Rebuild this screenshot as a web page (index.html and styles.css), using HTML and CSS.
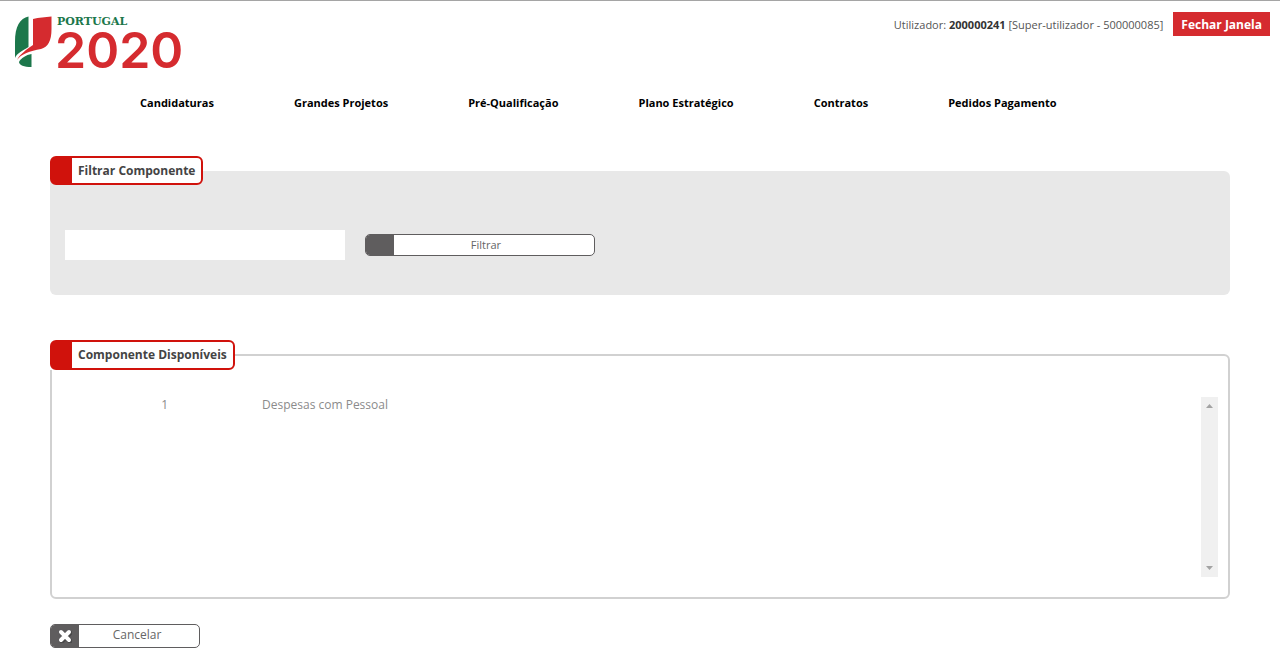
FILE: index.html
```html
<!DOCTYPE html>
<html lang="pt">
<head>
<meta charset="utf-8">
<title>Portugal 2020</title>
<link rel="stylesheet" href="styles.css">
</head>
<body>
<header class="top">
  <svg class="logo" width="190" height="74" viewBox="0 0 190 74" role="img" aria-label="Portugal 2020">
    <path fill="#1c774b" d="M18.500 5.500C10 7.500 5 15 5 31V47C7 42 12 40 18.500 36Z"/>
    <path fill="#d52b2f" d="M23 8C29 6.500 35 6 41.500 5.500V18C41.500 30 38 36 31 38C20 40 11 43 7 49C10 43 16 39 23 34Z"/>
    <path fill="#1c774b" d="M21.500 43V56C14 56 9 54 9 51C11 47 16 44 21.500 43Z"/>
    <text class="logo-name" x="47" y="14">PORTUGAL</text>
    <text class="logo-year" x="45" y="57">2020</text>
  </svg>
  <div class="user">
    <span>Utilizador: <strong>200000241</strong> [Super-utilizador - 500000085]</span>
    <button class="close" type="button">Fechar Janela</button>
  </div>
</header>
<nav class="menu">
  <a href="#">Candidaturas</a>
  <a href="#">Grandes Projetos</a>
  <a href="#">Pré-Qualificação</a>
  <a href="#">Plano Estratégico</a>
  <a href="#">Contratos</a>
  <a href="#">Pedidos Pagamento</a>
</nav>
<main class="content">
  <fieldset class="panel filter">
    <legend class="title">Filtrar Componente</legend>
    <div class="filter-row">
      <input class="field" type="text" aria-label="Componente">
      <button class="btn btn-wide" type="button"><span class="btn-icon"></span><span class="btn-label">Filtrar</span></button>
    </div>
  </fieldset>
  <fieldset class="panel results">
    <legend class="title">Componente Disponíveis</legend>
    <div class="list">
      <table class="rows">
        <tr><td class="code">1</td><td>Despesas com Pessoal</td></tr>
      </table>
      <div class="scroll" aria-hidden="true">
        <svg width="17" height="17" viewBox="0 0 17 17"><path fill="#a3a3a3" d="M5 11L8.500 7L12 11Z"/></svg>
        <svg width="17" height="17" viewBox="0 0 17 17"><path fill="#a3a3a3" d="M5 6L8.500 10L12 6Z"/></svg>
      </div>
    </div>
  </fieldset>
  <button class="btn btn-cancel" type="button"><span class="btn-icon"><svg width="14" height="14" viewBox="0 0 14 14"><path d="M3 3L11 11M11 3L3 11" stroke="#333" stroke-width="5" stroke-linecap="round" transform="translate(1 1)" opacity=".5"/><path d="M3 3L11 11M11 3L3 11" stroke="#fff" stroke-width="4" stroke-linecap="round"/></svg></span><span class="btn-label">Cancelar</span></button>
</main>
</body>
</html>
```
FILE: styles.css
```css
* { box-sizing: border-box; }
body {
  margin: 0;
  border-top: 1px solid #a5a5a5;
  background: #fff;
  color: #555;
  font-family: "Open Sans", "Noto Sans", sans-serif;
  font-size: 11px;
}
button { font-family: inherit; cursor: pointer; }
.top {
  display: flex;
  justify-content: space-between;
  align-items: flex-start;
  padding: 10px 10px 0;
}
.logo { display: block; }
.logo-name { font: bold 11px "DejaVu Serif", serif; fill: #1c774b; }
.logo-year { font: 600 50px Inter, sans-serif; fill: #d52b2f; }
.user {
  display: flex;
  align-items: center;
  gap: 10px;
  padding-top: 1px;
}
.user strong { color: #333; }
.close {
  height: 24px;
  padding: 0 8px;
  border: 0;
  background: #d52b2f;
  color: #fff;
  font-size: 12px;
  font-weight: bold;
}
.menu {
  display: flex;
  gap: 80px;
  padding: 10px 140px 0;
  line-height: 16px;
}
.menu a {
  color: #000;
  font-weight: bold;
  text-decoration: none;
  white-space: nowrap;
}
.content { padding: 45px 50px 10px; }
.panel {
  min-width: 0;
  margin: 0;
  padding: 0;
  border: 0;
  border-radius: 6px;
}
.title {
  height: 29px;
  padding: 0 6px;
  border: 2px solid #d0120c;
  border-left-width: 22px;
  border-radius: 6px;
  background: #fff;
  color: #444;
  font-size: 12px;
  font-weight: bold;
  line-height: 25px;
}
.filter { background: #e8e8e8; }
.filter-row {
  display: flex;
  align-items: center;
  gap: 20px;
  padding: 45px 15px 35px;
}
.field {
  width: 280px;
  height: 30px;
  border: 0;
  padding: 0 8px;
  background: #fff;
}
.btn {
  display: flex;
  height: 24px;
  padding: 0;
  overflow: hidden;
  border: 1px solid #5f5d5e;
  border-radius: 5px;
  background: #fff;
  color: #666;
  font-size: 12px;
}
.btn-wide { width: 230px; height: 22px; font-size: 11px; }
.btn-cancel { width: 150px; margin-top: 25px; }
.btn-icon {
  display: flex;
  align-items: center;
  justify-content: center;
  width: 28px;
  height: 100%;
  background: #5f5d5e;
}
.btn-label {
  flex: 1;
  padding-right: 16px;
  line-height: 20px;
  text-align: center;
}
.btn-cancel .btn-label { padding-right: 4px; }
.results {
  margin-top: 45px;
  border: 2px solid #d1d1d1;
}
.results .title { height: 30px; margin-left: -2px; }
.list {
  display: flex;
  justify-content: space-between;
  align-items: flex-start;
  height: 180px;
  margin: 27px 10px 20px;
}
.rows {
  border-collapse: collapse;
  color: #8b8b8b;
  font-size: 12px;
  line-height: 16px;
}
.rows td { padding: 0; }
.rows .code { width: 200px; padding-right: 94px; text-align: right; }
.scroll {
  display: flex;
  flex-direction: column;
  justify-content: space-between;
  width: 17px;
  height: 100%;
  background: #f0f0f0;
}
```
